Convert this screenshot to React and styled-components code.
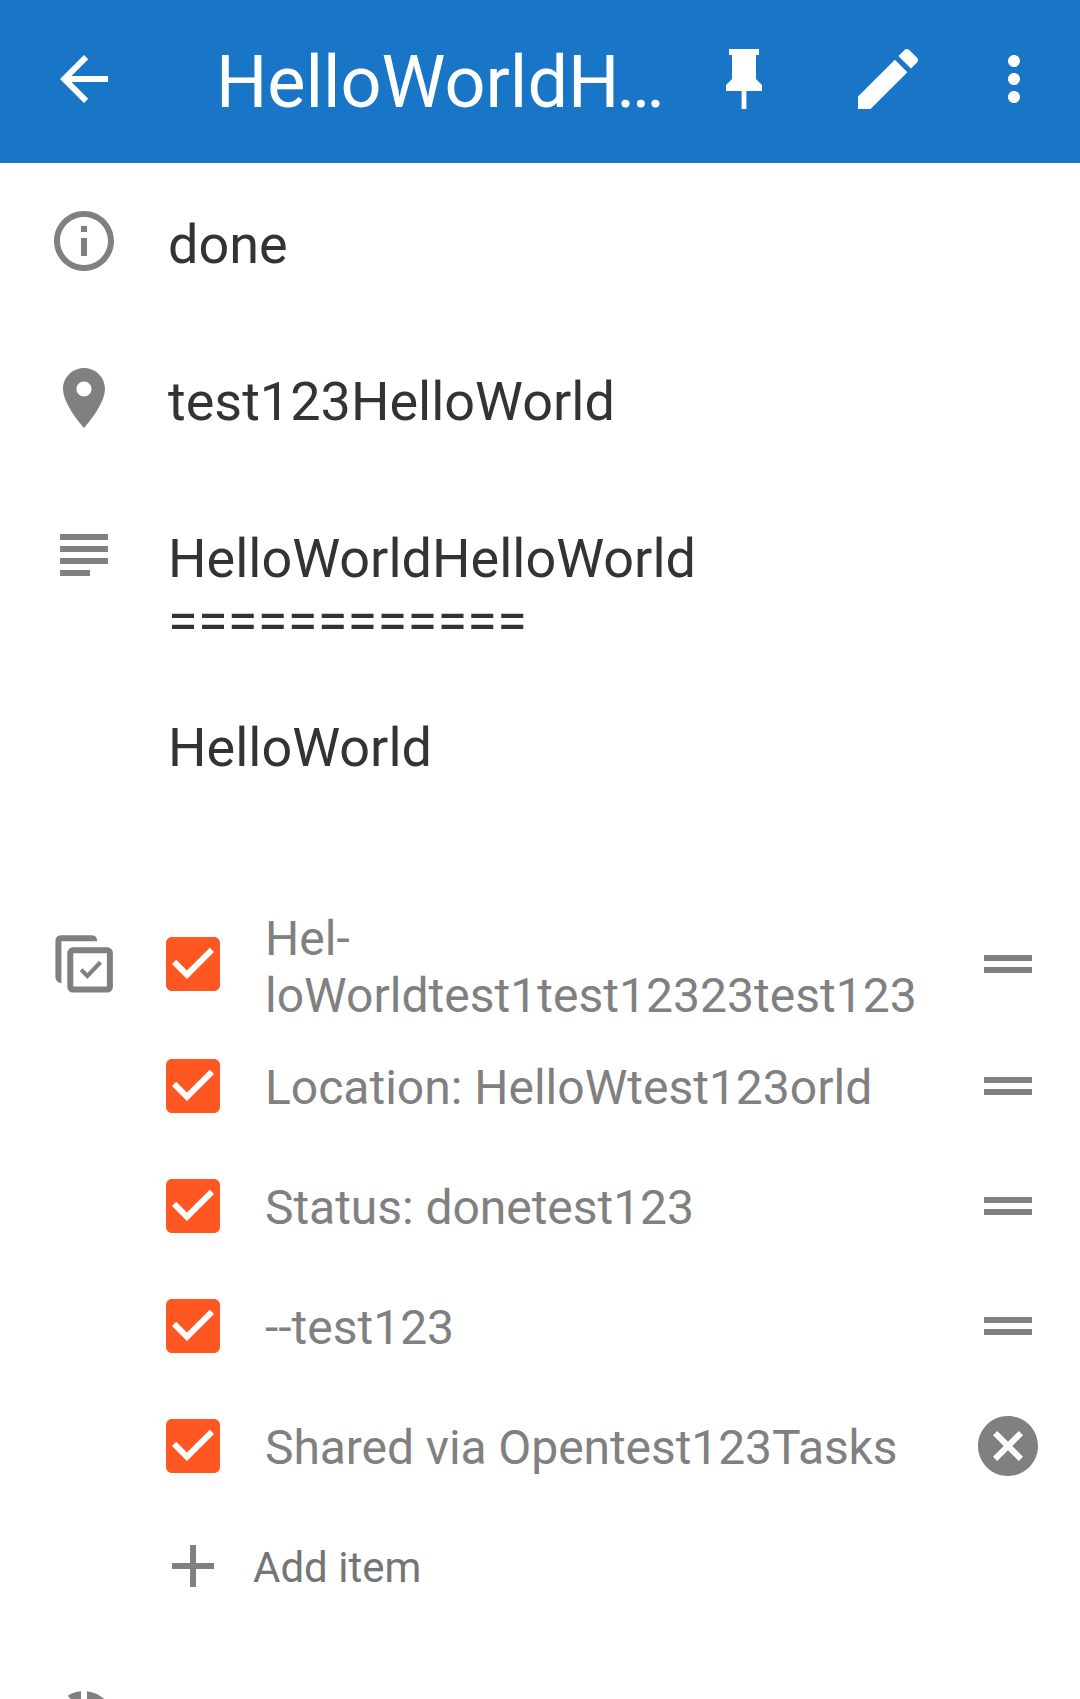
import React from "react";
import styled, { createGlobalStyle } from "styled-components";

const GlobalStyle = createGlobalStyle`
  * { box-sizing: border-box; }
  html, body { margin: 0; padding: 0; background: #fff; }
  body { font-family: Roboto, "Noto Sans", sans-serif; }
`;

const Screen = styled.div`
  width: 1080px;
  height: 1699px;
  overflow: hidden;
  display: flex;
  flex-direction: column;
`;

const Toolbar = styled.header`
  display: flex;
  align-items: center;
  flex: none;
  height: 163px;
  padding: 0 30px 5px 48px;
  background: #1976c7;
  color: #fff;
`;

const Title = styled.h1`
  margin: 8px 0 0 96px;
  width: 460px;
  font-size: 72px;
  line-height: 84px;
  font-weight: 400;
  white-space: nowrap;
`;

const TightLetter = styled.span`
  letter-spacing: -3px;
`;

const Actions = styled.div`
  display: flex;
  flex: 1;
  justify-content: flex-end;
`;

const ActionSlot = styled.button`
  display: flex;
  padding: 0;
  margin: 0 0 0 ${(p) => p.$before || 0}px;
  border: 0;
  background: none;
  color: inherit;
`;

const Glyph = styled.svg`
  display: block;
  flex: none;
  width: 72px;
  height: 72px;
  fill: currentColor;
`;

const Content = styled.main`
  display: flex;
  flex-direction: column;
  flex: none;
  padding: 42px 36px 0 48px;
  color: #808080;
`;

const Field = styled.section`
  display: flex;
  align-items: flex-start;
  gap: 48px;
  height: ${(p) => p.$height}px;
`;

const FieldText = styled.div`
  padding-top: 8px;
  color: #333;
  font-size: 54px;
  line-height: 63px;
  white-space: pre;
`;

const Underline = styled.span`
  letter-spacing: 0.3px;
`;

const Lead = styled.div`
  padding-top: ${(p) => p.$top || 0}px;
`;

const List = styled.div`
  display: flex;
  flex-direction: column;
  flex: 1;
  margin-left: -11px;
`;

const Item = styled.div`
  display: flex;
  align-items: center;
  height: ${(p) => (p.$tall ? 124 : 120)}px;
`;

const CheckSlot = styled.div`
  color: #ff5722;
`;

const ItemText = styled.div`
  flex: 1;
  margin-left: 36px;
  padding-top: ${(p) => (p.$tall ? 5 : 3)}px;
  font-size: 48px;
  line-height: 57px;
  letter-spacing: ${(p) => p.$tracking || 0}px;
  white-space: pre;
`;

const AddText = styled.div`
  margin-left: 24px;
  padding-top: 3px;
  color: #757575;
  font-size: 42px;
  line-height: 49px;
`;

const PATHS = {
  back: "M20 11H7.83l5.59-5.59L12 4l-8 8 8 8 1.41-1.41L7.83 13H20v-2z",
  pin: "M16 12V4h1V2H7v2h1v8l-2 2v2h5.2v6h1.6v-6H18v-2l-2-2z",
  edit: "M3 17.25V21h3.75L17.81 9.94l-3.75-3.75L3 17.25zM20.71 7.04c.39-.39.39-1.02 0-1.41l-2.34-2.34c-.39-.39-1.02-.39-1.41 0l-1.83 1.83 3.75 3.75 1.83-1.83z",
  more: "M12 8c1.1 0 2-.9 2-2s-.9-2-2-2-2 .9-2 2 .9 2 2 2zm0 2c-1.1 0-2 .9-2 2s.9 2 2 2 2-.9 2-2-.9-2-2-2zm0 6c-1.1 0-2 .9-2 2s.9 2 2 2 2-.9 2-2-.9-2-2-2z",
  info: "M11 17h2v-6h-2v6zm1-15C6.48 2 2 6.48 2 12s4.48 10 10 10 10-4.48 10-10S17.52 2 12 2zm0 18c-4.41 0-8-3.59-8-8s3.59-8 8-8 8 3.59 8 8-3.59 8-8 8zM11 9h2V7h-2v2z",
  place: "M12 2C8.13 2 5 5.13 5 9c0 5.25 7 13 7 13s7-7.75 7-13c0-3.87-3.13-7-7-7zm0 9.5c-1.38 0-2.5-1.12-2.5-2.5s1.12-2.5 2.5-2.5 2.5 1.12 2.5 2.5-1.12 2.5-2.5 2.5z",
  subject: "M14 17H4v2h10v-2zm6-8H4v2h16V9zM4 15h16v-2H4v2zM4 5v2h16V5H4z",
  checkbox: "M19 3H5c-1.11 0-2 .9-2 2v14c0 1.1.89 2 2 2h14c1.11 0 2-.9 2-2V5c0-1.1-.89-2-2-2zm-9 14l-5-5 1.41-1.41L10 14.17l7.59-7.59L19 8l-9 9z",
  drag: "M20 9H4v2h16V9zM4 15h16v-2H4v2z",
  cancel: "M12 2C6.47 2 2 6.47 2 12s4.47 10 10 10 10-4.47 10-10S17.53 2 12 2zm5 13.59L15.59 17 12 13.41 8.41 17 7 15.59 10.59 12 7 8.41 8.41 7 12 10.59 15.59 7 17 8.41 13.41 12 17 15.59z",
  add: "M19 13h-6v6h-2v-6H5v-2h6V5h2v6h6v2z",
};

const Icon = ({ name, viewBox = "0 0 24 24" }) => (
  <Glyph viewBox={viewBox} aria-hidden="true">
    <path d={PATHS[name]} />
  </Glyph>
);

const ChecklistIcon = () => (
  <Glyph viewBox="0 0 72 72" aria-hidden="true">
    <path d="M13 7.300H44Q49 7.500 49.300 13.300H13.400V55.300Q7.500 54.500 7.400 49V13Q7.500 7.400 13 7.300Z" />
    <rect x="22.300" y="22.300" width="39.600" height="39.300" rx="2.500" fill="none" stroke="currentColor" strokeWidth="6" />
    <path d="M51 32.700L54 35.700L39.300 51L31.700 43L34.700 40.200L39.300 45Z" />
  </Glyph>
);

const ProgressIcon = () => (
  <Glyph viewBox="0 0 24 24" aria-hidden="true">
    <path d="M13 2.050V5.080C16.390 5.570 19 8.470 19 12H22C22 6.800 18 2.550 13 2.050ZM11 2.050C9.200 2.200 7.800 2.700 6.600 3.550L8.700 6C9.400 5.500 10.200 5.220 11 5.080Z" />
  </Glyph>
);

const ITEMS = [
  { text: "Hel-\nloWorldtest1test12323test123", tall: true, tracking: 0.03 },
  { text: "Location: HelloWtest123orld" },
  { text: "Status: donetest123", tracking: -0.04 },
  { text: "--test123" },
  { text: "Shared via Opentest123Tasks", removable: true, tracking: -0.08 },
];

export default function App() {
  return (
    <Screen>
      <GlobalStyle />
      <Toolbar>
        <ActionSlot aria-label="Back"><Icon name="back" /></ActionSlot>
        <Title>HelloWorld<TightLetter>H</TightLetter>…</Title>
        <Actions>
          <ActionSlot aria-label="Pin"><Icon name="pin" /></ActionSlot>
          <ActionSlot aria-label="Edit" $before={72}><Icon name="edit" viewBox="1.2 1.2 21.6 21.6" /></ActionSlot>
          <ActionSlot aria-label="More" $before={54}><Icon name="more" /></ActionSlot>
        </Actions>
      </Toolbar>
      <Content>
        <Field $height={157}>
          <Icon name="info" />
          <FieldText>done</FieldText>
        </Field>
        <Field $height={157}>
          <Icon name="place" />
          <FieldText>test123HelloWorld</FieldText>
        </Field>
        <Field $height={383}>
          <Icon name="subject" />
          <FieldText>
            {"HelloWorldHelloWorld\n"}
            <Underline>============</Underline>
            {"\n\nHelloWorld"}
          </FieldText>
        </Field>
        <Field $height={783}>
          <Lead $top={26}><ChecklistIcon /></Lead>
          <List>
            {ITEMS.map((item) => (
              <Item key={item.text} $tall={item.tall}>
                <CheckSlot><Icon name="checkbox" /></CheckSlot>
                <ItemText $tall={item.tall} $tracking={item.tracking}>{item.text}</ItemText>
                <Icon name={item.removable ? "cancel" : "drag"} />
              </Item>
            ))}
            <Item>
              <Icon name="add" />
              <AddText>Add item</AddText>
            </Item>
          </List>
        </Field>
        <Field $height={72}>
          <ProgressIcon />
        </Field>
      </Content>
    </Screen>
  );
}
